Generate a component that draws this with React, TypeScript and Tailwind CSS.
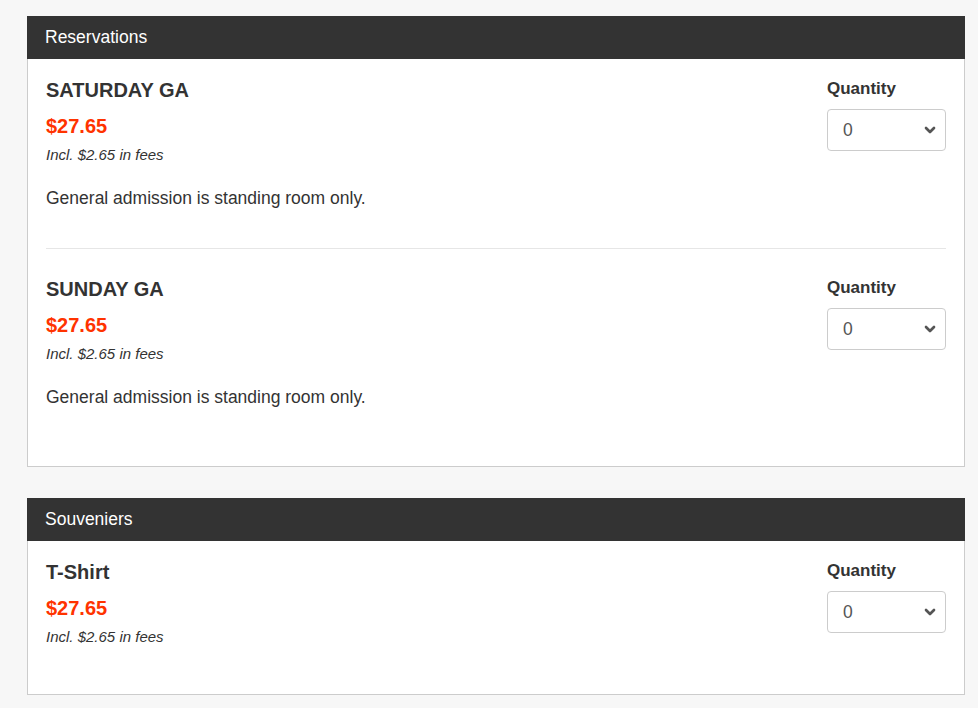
import { ChevronDown } from 'lucide-react';

type Item = {
  name: string;
  price: string;
  fees: string;
  description?: string;
};

type Section = {
  title: string;
  items: Item[];
};

const sections: Section[] = [
  {
    title: 'Reservations',
    items: [
      { name: 'SATURDAY GA', price: '$27.65', fees: 'Incl. $2.65 in fees', description: 'General admission is standing room only.' },
      { name: 'SUNDAY GA', price: '$27.65', fees: 'Incl. $2.65 in fees', description: 'General admission is standing room only.' },
    ],
  },
  {
    title: 'Souveniers',
    items: [{ name: 'T-Shirt', price: '$27.65', fees: 'Incl. $2.65 in fees' }],
  },
];

function QuantitySelect() {
  return (
    <div className="w-[119px] shrink-0">
      <div className="text-[17px] font-bold leading-[21px] text-[#333]">Quantity</div>
      <div className="relative mt-[10px]">
        <select
          defaultValue="0"
          className="h-[42px] w-full appearance-none rounded-[4px] border border-[#ccc] bg-white pl-[15px] pr-8 text-[17.5px] text-[#555] outline-none"
        >
          {[0, 1, 2, 3, 4, 5, 6, 7, 8, 9, 10].map((n) => (
            <option key={n} value={n}>
              {n}
            </option>
          ))}
        </select>
        <ChevronDown
          className="pointer-events-none absolute right-[8px] top-[13px] h-[16px] w-[16px] text-[#555]"
          strokeWidth={4}
        />
      </div>
    </div>
  );
}

function ItemRow({ item, first, last }: { item: Item; first: boolean; last: boolean }) {
  return (
    <div
      className={
        (first ? 'pt-[19px] ' : 'pt-[28px] ') +
        (last ? (item.description ? 'pb-[58px] ' : 'pb-[48px] ') : 'border-b border-[#e6e6e6] pb-[39px] ') +
        'flex justify-between'
      }
    >
      <div>
        <div className="text-[20px] font-bold leading-[24px] text-[#333]">{item.name}</div>
        <div className="mt-[12px] text-[20px] font-bold leading-[24px] text-[#ff3300]">{item.price}</div>
        <div className="mt-[8px] text-[15px] italic leading-[18px] text-[#333]">{item.fees}</div>
        {item.description ? (
          <p className="mt-[24px] text-[17.5px] leading-[21px] text-[#333]">{item.description}</p>
        ) : null}
      </div>
      <QuantitySelect />
    </div>
  );
}

export default function App() {
  return (
    <div
      className="min-h-[708px] bg-[#f7f7f7] pb-4 pl-[27px] pr-[13px] pt-4"
      style={{ fontFamily: '"Liberation Sans", Arial, sans-serif' }}
    >
      <div className="flex flex-col gap-[31px]">
        {sections.map((section) => (
          <div key={section.title}>
            <div className="flex h-[43px] items-center bg-[#333] px-[18px] text-[17.5px] text-white">{section.title}</div>
            <div className="border border-t-0 border-[#ccc] bg-white px-[18px]">
              {section.items.map((item, i) => (
                <ItemRow key={item.name} item={item} first={i === 0} last={i === section.items.length - 1} />
              ))}
            </div>
          </div>
        ))}
      </div>
    </div>
  );
}
